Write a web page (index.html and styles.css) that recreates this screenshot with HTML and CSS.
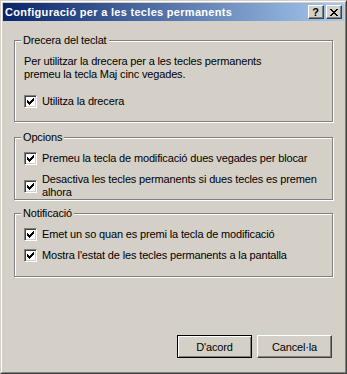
FILE: index.html
```html
<!DOCTYPE html>
<html>
<head>
<meta charset="utf-8">
<title>Configuració per a les tecles permanents</title>
<link rel="stylesheet" href="styles.css">
</head>
<body>
<div class="window">
  <div class="frame">
    <div class="titlebar">
      <span class="title">Configuració per a les tecles permanents</span>
      <div class="caption-buttons">
        <div class="cap-btn help">?</div>
        <div class="cap-btn close">
          <svg width="8" height="7" viewBox="0 0 8 7" shape-rendering="crispEdges"><path d="M0 0h2v1h-2zM6 0h2v1h-2zM1 1h2v1h-2zM5 1h2v1h-2zM2 2h4v1h-4zM3 3h2v1h-2zM2 4h4v1h-4zM1 5h2v1h-2zM5 5h2v1h-2zM0 6h2v1h-2zM6 6h2v1h-2z" fill="#000"/></svg>
        </div>
      </div>
    </div>
    <div class="body">
      <fieldset class="group g1">
        <legend>Drecera del teclat</legend>
        <p class="desc">Per utilitzar la drecera per a les tecles permanents<br>premeu la tecla Maj cinc vegades.</p>
        <div class="check g1-check">
          <span class="box"><svg width="7" height="7" viewBox="0 0 7 7" shape-rendering="crispEdges"><path d="M6 0h1v1h-1zM5 1h2v1h-2zM0 2h1v1h-1zM4 2h3v1h-3zM0 3h2v1h-2zM3 3h3v1h-3zM0 4h5v1h-5zM1 5h3v1h-3zM2 6h1v1h-1z" fill="#000"/></svg></span>
          <span class="label">Utilitza la drecera</span>
        </div>
      </fieldset>
      <fieldset class="group g2">
        <legend>Opcions</legend>
        <div class="check">
          <span class="box"><svg width="7" height="7" viewBox="0 0 7 7" shape-rendering="crispEdges"><path d="M6 0h1v1h-1zM5 1h2v1h-2zM0 2h1v1h-1zM4 2h3v1h-3zM0 3h2v1h-2zM3 3h3v1h-3zM0 4h5v1h-5zM1 5h3v1h-3zM2 6h1v1h-1z" fill="#000"/></svg></span>
          <span class="label">Premeu la tecla de modificació dues vegades per blocar</span>
        </div>
        <div class="check spaced">
          <span class="box"><svg width="7" height="7" viewBox="0 0 7 7" shape-rendering="crispEdges"><path d="M6 0h1v1h-1zM5 1h2v1h-2zM0 2h1v1h-1zM4 2h3v1h-3zM0 3h2v1h-2zM3 3h3v1h-3zM0 4h5v1h-5zM1 5h3v1h-3zM2 6h1v1h-1z" fill="#000"/></svg></span>
          <span class="label">Desactiva les tecles permanents si dues tecles es premen<br>alhora</span>
        </div>
      </fieldset>
      <fieldset class="group g3">
        <legend>Notificació</legend>
        <div class="check">
          <span class="box"><svg width="7" height="7" viewBox="0 0 7 7" shape-rendering="crispEdges"><path d="M6 0h1v1h-1zM5 1h2v1h-2zM0 2h1v1h-1zM4 2h3v1h-3zM0 3h2v1h-2zM3 3h3v1h-3zM0 4h5v1h-5zM1 5h3v1h-3zM2 6h1v1h-1z" fill="#000"/></svg></span>
          <span class="label">Emet un so quan es premi la tecla de modificació</span>
        </div>
        <div class="check spaced">
          <span class="box"><svg width="7" height="7" viewBox="0 0 7 7" shape-rendering="crispEdges"><path d="M6 0h1v1h-1zM5 1h2v1h-2zM0 2h1v1h-1zM4 2h3v1h-3zM0 3h2v1h-2zM3 3h3v1h-3zM0 4h5v1h-5zM1 5h3v1h-3zM2 6h1v1h-1z" fill="#000"/></svg></span>
          <span class="label">Mostra l'estat de les tecles permanents a la pantalla</span>
        </div>
      </fieldset>
      <div class="footer">
        <button class="btn default" type="button">D'acord</button>
        <button class="btn" type="button">Cancel·la</button>
      </div>
    </div>
  </div>
</div>
</body>
</html>
```
FILE: styles.css
```css
html, body {
  margin: 0;
  padding: 0;
  background: #D4D0C8;
}
body {
  font-family: "Liberation Sans", Arial, sans-serif;
  font-size: 11px;
  line-height: 13px;
  letter-spacing: -0.15px;
  color: #000;
}
.window {
  width: 347px;
  height: 374px;
  box-sizing: border-box;
  border: 1px solid;
  border-color: #D4D0C8 #404040 #404040 #D4D0C8;
  background: #D4D0C8;
}
.frame {
  height: 100%;
  box-sizing: border-box;
  border: 1px solid;
  border-color: #FFFFFF #808080 #808080 #FFFFFF;
  padding: 1px;
  display: flex;
  flex-direction: column;
}
.titlebar {
  height: 18px;
  flex: none;
  background: linear-gradient(to right, #0A246A, #A6CAF0);
  display: flex;
  align-items: center;
  justify-content: space-between;
  padding: 0 2px 0 2px;
}
.title {
  color: #FFFFFF;
  font-weight: bold;
  font-size: 11px;
  letter-spacing: 0.3px;
  white-space: nowrap;
}
.caption-buttons {
  display: flex;
  gap: 2px;
}
.cap-btn {
  width: 16px;
  height: 14px;
  box-sizing: border-box;
  border: 1px solid;
  border-color: #FFFFFF #404040 #404040 #FFFFFF;
  box-shadow: inset -1px -1px 0 #808080;
  background: #D4D0C8;
  display: flex;
  align-items: center;
  justify-content: center;
}
.help {
  font-weight: bold;
  font-size: 11px;
  line-height: 12px;
  letter-spacing: 0;
  padding-right: 1px;
}
.close svg {
  display: block;
  margin-right: 1px;
}
.body {
  flex: 1;
  display: flex;
  flex-direction: column;
  padding: 13px 11px 13px 11px;
}
.group {
  margin: 0;
  padding: 8px 9px 13px 9px;
  border: 1px solid #808080;
  box-shadow: 1px 1px 0 #FFFFFF, inset 1px 1px 0 #FFFFFF;
  min-inline-size: 0;
}
.group legend {
  padding: 0 2px;
  margin-left: -3px;
  background: #D4D0C8;
  line-height: 13px;
}
.g2 {
  margin-top: 9px;
  padding-bottom: 0;
}
.g3 {
  margin-top: 7px;
  padding-bottom: 14px;
}
.desc {
  margin: 0;
  white-space: nowrap;
}
.g1-check {
  margin-top: 14px;
}
.check {
  display: flex;
  align-items: center;
}
.check.spaced {
  margin-top: 8px;
}
.box {
  width: 13px;
  height: 13px;
  flex: none;
  box-sizing: border-box;
  border: 1px solid;
  border-color: #808080 #FFFFFF #FFFFFF #808080;
  box-shadow: inset 1px 1px 0 #404040, inset -1px -1px 0 #D4D0C8;
  background: #FFFFFF;
  margin-right: 5px;
  display: flex;
  align-items: center;
  justify-content: center;
}
.box svg {
  display: block;
}
.label {
  line-height: 13px;
  white-space: nowrap;
}
.footer {
  margin-top: auto;
  display: flex;
  justify-content: flex-end;
  gap: 5px;
  padding-right: 1px;
}
.btn {
  width: 75px;
  height: 23px;
  box-sizing: border-box;
  margin: 0;
  padding: 0;
  font-family: "Liberation Sans", Arial, sans-serif;
  font-size: 11px;
  letter-spacing: -0.15px;
  color: #000;
  background: #D4D0C8;
  border: 1px solid;
  border-color: #FFFFFF #404040 #404040 #FFFFFF;
  box-shadow: inset -1px -1px 0 #808080;
  border-radius: 0;
}
.btn.default {
  border-color: #000000;
  box-shadow: inset 1px 1px 0 #FFFFFF, inset -1px -1px 0 #808080;
}
```
